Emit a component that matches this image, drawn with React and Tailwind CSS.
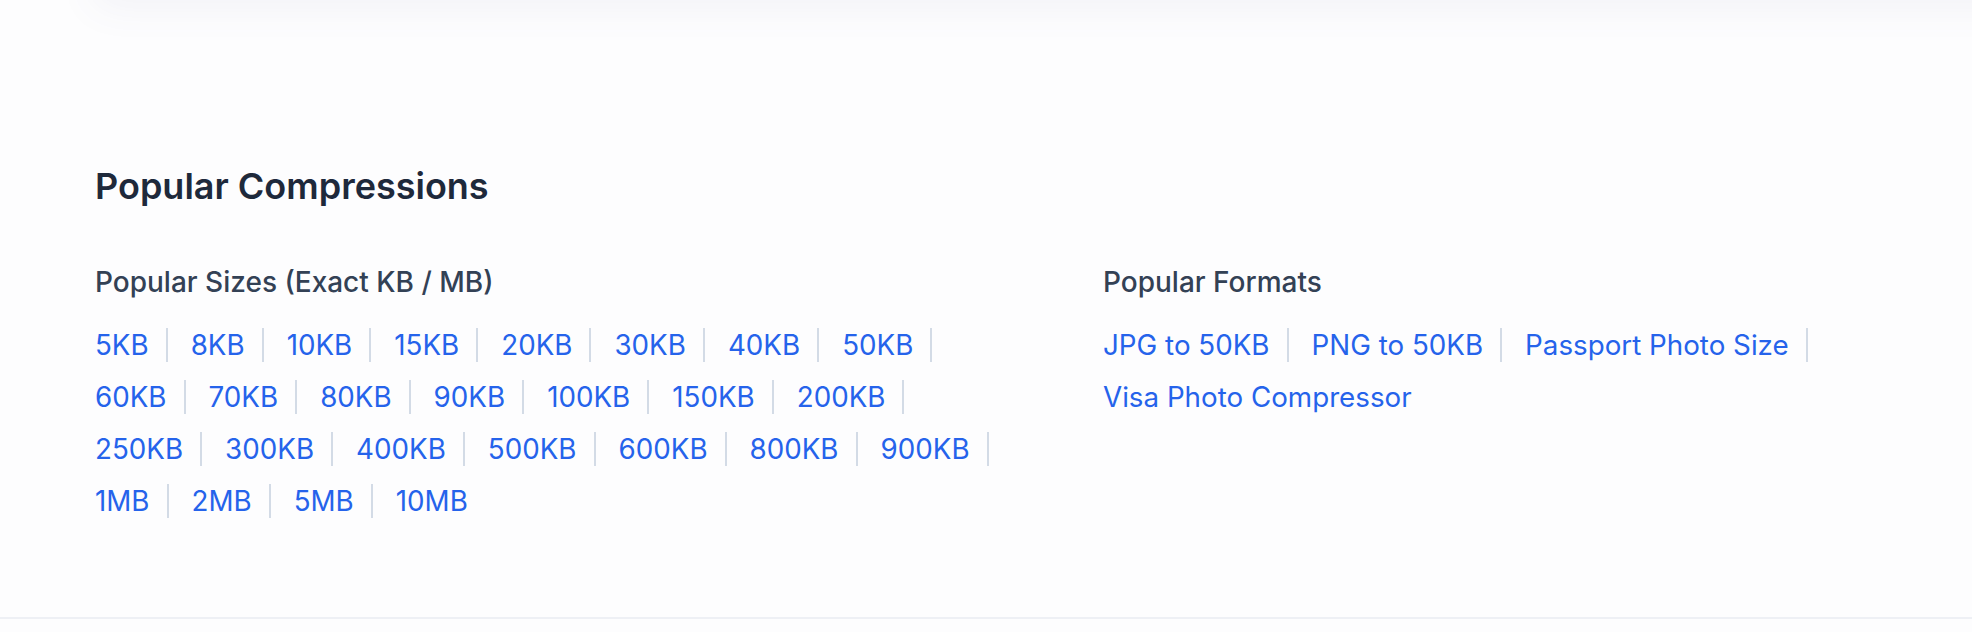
import React from 'react';

const sizes = [
  '5KB', '8KB', '10KB', '15KB', '20KB', '30KB', '40KB', '50KB',
  '60KB', '70KB', '80KB', '90KB', '100KB', '150KB', '200KB',
  '250KB', '300KB', '400KB', '500KB', '600KB', '800KB', '900KB',
  '1MB', '2MB', '5MB', '10MB',
];

const formats = ['JPG to 50KB', 'PNG to 50KB', 'Passport Photo Size', 'Visa Photo Compressor'];

// rows are fixed in the screenshot, so keep the breaks explicit
const sizeRows = [sizes.slice(0, 8), sizes.slice(8, 15), sizes.slice(15, 22), sizes.slice(22)];
const formatRows = [formats.slice(0, 3), formats.slice(3)];

const LinkRow = ({ items, lastBorder = true }) => (
  <div className="flex gap-x-[23px]">
    {items.map((item, i) => (
      <a
        key={item}
        href="#"
        className={
          'block leading-[34px] pr-[17px] text-[#2563eb] hover:underline ' +
          (i < items.length - 1 || lastBorder ? 'border-r-2 border-[#d3dbe6]' : '')
        }
      >
        {item}
      </a>
    ))}
  </div>
);

export default function App() {
  return (
    <div
      className="relative min-h-[632px] overflow-hidden bg-[#fdfdfe]"
      style={{ fontFamily: 'Inter, "Noto Sans", sans-serif' }}
    >
      {/* shadow from the card that sits above this section */}
      <div className="h-[120px] -mt-[120px] ml-[95px] -mr-[60px] bg-white shadow-[0_6px_40px_rgba(90,90,140,0.07)]" />

      <section className="px-[95px] pt-[165px]">
        <h2 className="text-[36px] leading-[42px] font-semibold text-[#1e293b]">
          Popular Compressions
        </h2>

        <div className="mt-[57px] grid grid-cols-[915px_1fr] gap-x-[93px]">
          <div>
            <h3 className="text-[28px] leading-[36px] font-medium text-[#334155]">
              Popular Sizes (Exact KB / MB)
            </h3>
            <div className="mt-[28px] flex flex-col gap-y-[18px] text-[27.75px]">
              {sizeRows.map((row, i) => (
                <LinkRow key={i} items={row} lastBorder={i < sizeRows.length - 1} />
              ))}
            </div>
          </div>

          <div>
            <h3 className="text-[28px] leading-[36px] font-medium text-[#334155]">
              Popular Formats
            </h3>
            <div className="mt-[28px] flex flex-col gap-y-[18px] text-[27.75px]">
              {formatRows.map((row, i) => (
                <LinkRow key={i} items={row} lastBorder={i < formatRows.length - 1} />
              ))}
            </div>
          </div>
        </div>
      </section>

      <div className="absolute left-0 right-0 top-[617px] h-[2px] bg-[#eef0f5]" />
    </div>
  );
}
